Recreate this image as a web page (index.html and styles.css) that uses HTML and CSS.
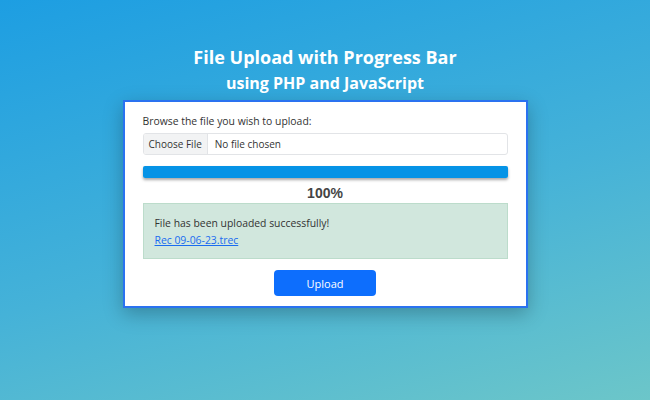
FILE: index.html
```html
<!DOCTYPE html>
<html lang="en">
<head>
    <meta charset="UTF-8">
    <meta name="viewport" content="width=device-width, initial-scale=1.0">
    <title>File Upload with Progress Bar</title>
    <link rel="stylesheet" href="styles.css">
</head>
<body>
    <div class="page">
        <h1 class="title">
            File Upload with Progress Bar
            <span class="subtitle">using PHP and JavaScript</span>
        </h1>

        <form id="uploadForm" class="card" action="upload.php" method="POST" enctype="multipart/form-data">
            <label for="fileInput" class="label">Browse the file you wish to upload:</label>
            <div class="file-field">
                <span class="file-button">Choose File</span>
                <span class="file-name">No file chosen</span>
                <input type="file" id="fileInput" name="file">
            </div>

            <div class="progress">
                <div class="progress-bar" style="width: 100%"></div>
            </div>
            <div class="progress-text">100%</div>

            <div class="alert">
                <div>File has been uploaded successfully!</div>
                <a href="#">Rec 09-06-23.trec</a>
            </div>

            <div class="actions">
                <button type="submit" class="btn">Upload</button>
            </div>
        </form>
    </div>
</body>
</html>
```

FILE: styles.css
```css
html, body {
    height: 100%;
}
body {
    margin: 0;
    font-family: "Open Sans", "Noto Sans", sans-serif;
    background: linear-gradient(165deg, #1d9ee2 0%, #45b2d8 55%, #6cc6c9 100%);
}
.page {
    padding-top: 44px;
}
.title {
    margin: 0 0 4px;
    color: #fff;
    text-align: center;
    font-size: 18px;
    line-height: 26px;
    font-weight: 700;
}
.subtitle {
    display: block;
    font-size: 16px;
    line-height: 26px;
}
.card {
    box-sizing: border-box;
    width: 405px;
    margin: 0 auto;
    padding: 10px 18px 10px;
    background: #fff;
    border: 2px solid #2a72f0;
    box-shadow: 0 6px 18px rgba(0, 0, 0, 0.25);
}
.label {
    display: block;
    font-size: 10.4px;
    line-height: 18px;
    color: #333;
    margin-bottom: 3px;
}
.file-field {
    position: relative;
    display: flex;
    box-sizing: border-box;
    height: 22px;
    border: 1px solid #e2e4e7;
    border-radius: 3px;
    font-size: 10px;
    line-height: 20px;
    color: #333;
    overflow: hidden;
}
.file-field input {
    position: absolute;
    inset: 0;
    opacity: 0;
}
.file-button {
    padding: 0 5px;
    background: #f2f3f4;
    border-right: 1px solid #e2e4e7;
}
.file-name {
    padding: 0 7px;
}
.progress {
    margin-top: 11px;
    height: 12px;
    border-radius: 2px;
    background: #e9ecef;
    box-shadow: 0 2px 3px rgba(0, 0, 0, 0.35);
    overflow: hidden;
}
.progress-bar {
    height: 100%;
    background: #0593e6;
}
.progress-text {
    margin-top: 6px;
    text-align: center;
    font-family: "Liberation Sans", Arial, sans-serif;
    font-weight: 700;
    font-size: 14px;
    line-height: 19px;
    color: #444;
}
.alert {
    padding: 11px 11px 9px;
    background: #d1e7dd;
    border: 1px solid #bcdccb;
    font-size: 10.4px;
    line-height: 17px;
    color: #333;
}
.alert a {
    color: #1a6cf0;
}
.actions {
    display: flex;
    justify-content: center;
    margin-top: 11px;
}
.btn {
    width: 102px;
    height: 26px;
    border: 0;
    border-radius: 4px;
    background: #0d6efd;
    color: #fff;
    font-family: inherit;
    font-size: 11px;
}
```
